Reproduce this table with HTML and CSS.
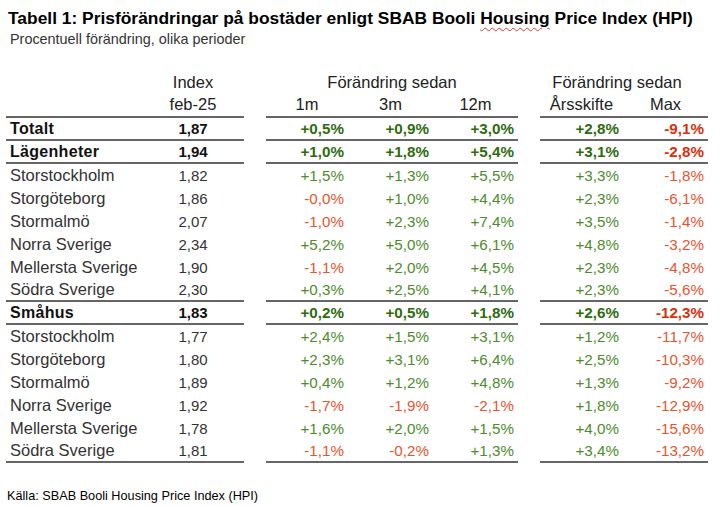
FILE: index.html
```html
<!DOCTYPE html>
<html lang="sv">
<head>
<meta charset="utf-8">
<title>Tabell 1</title>
<link rel="stylesheet" href="styles.css">
</head>
<body>
<div class="page">
  <h1 class="title">Tabell 1: Prisförändringar på bostäder enligt SBAB Booli <span class="spell">Housing</span> Price Index (HPI)</h1>
  <p class="sub">Procentuell förändring, olika perioder</p>
  <div class="tbl">
    <div class="row head1">
      <div class="c lab"></div><div class="c idx">Index</div><div class="sp"></div>
      <div class="c grp3">Förändring sedan</div><div class="sp"></div>
      <div class="c grp2">Förändring sedan</div>
    </div>
    <div class="row head2 line">
      <div class="c lab"></div><div class="c idx">feb-25</div><div class="sp"></div>
      <div class="c hc">1m</div><div class="c hc">3m</div><div class="c hc">12m</div><div class="sp"></div>
      <div class="c hc">Årsskifte</div><div class="c hc">Max</div>
    </div>

    <div class="row bold line">
      <div class="c lab">Totalt</div><div class="c idx">1,87</div><div class="sp"></div>
      <div class="c num pos">+0,5%</div><div class="c num pos">+0,9%</div><div class="c num pos">+3,0%</div><div class="sp"></div>
      <div class="c num pos">+2,8%</div><div class="c num neg">-9,1%</div>
    </div>
    <div class="row bold line">
      <div class="c lab">Lägenheter</div><div class="c idx">1,94</div><div class="sp"></div>
      <div class="c num pos">+1,0%</div><div class="c num pos">+1,8%</div><div class="c num pos">+5,4%</div><div class="sp"></div>
      <div class="c num pos">+3,1%</div><div class="c num neg">-2,8%</div>
    </div>
    <div class="row">
      <div class="c lab">Storstockholm</div><div class="c idx">1,82</div><div class="sp"></div>
      <div class="c num pos">+1,5%</div><div class="c num pos">+1,3%</div><div class="c num pos">+5,5%</div><div class="sp"></div>
      <div class="c num pos">+3,3%</div><div class="c num neg">-1,8%</div>
    </div>
    <div class="row">
      <div class="c lab">Storgöteborg</div><div class="c idx">1,86</div><div class="sp"></div>
      <div class="c num neg">-0,0%</div><div class="c num pos">+1,0%</div><div class="c num pos">+4,4%</div><div class="sp"></div>
      <div class="c num pos">+2,3%</div><div class="c num neg">-6,1%</div>
    </div>
    <div class="row">
      <div class="c lab">Stormalmö</div><div class="c idx">2,07</div><div class="sp"></div>
      <div class="c num neg">-1,0%</div><div class="c num pos">+2,3%</div><div class="c num pos">+7,4%</div><div class="sp"></div>
      <div class="c num pos">+3,5%</div><div class="c num neg">-1,4%</div>
    </div>
    <div class="row">
      <div class="c lab">Norra Sverige</div><div class="c idx">2,34</div><div class="sp"></div>
      <div class="c num pos">+5,2%</div><div class="c num pos">+5,0%</div><div class="c num pos">+6,1%</div><div class="sp"></div>
      <div class="c num pos">+4,8%</div><div class="c num neg">-3,2%</div>
    </div>
    <div class="row">
      <div class="c lab">Mellersta Sverige</div><div class="c idx">1,90</div><div class="sp"></div>
      <div class="c num neg">-1,1%</div><div class="c num pos">+2,0%</div><div class="c num pos">+4,5%</div><div class="sp"></div>
      <div class="c num pos">+2,3%</div><div class="c num neg">-4,8%</div>
    </div>
    <div class="row line">
      <div class="c lab">Södra Sverige</div><div class="c idx">2,30</div><div class="sp"></div>
      <div class="c num pos">+0,3%</div><div class="c num pos">+2,5%</div><div class="c num pos">+4,1%</div><div class="sp"></div>
      <div class="c num pos">+2,3%</div><div class="c num neg">-5,6%</div>
    </div>

    <div class="row bold line">
      <div class="c lab">Småhus</div><div class="c idx">1,83</div><div class="sp"></div>
      <div class="c num pos">+0,2%</div><div class="c num pos">+0,5%</div><div class="c num pos">+1,8%</div><div class="sp"></div>
      <div class="c num pos">+2,6%</div><div class="c num neg">-12,3%</div>
    </div>
    <div class="row">
      <div class="c lab">Storstockholm</div><div class="c idx">1,77</div><div class="sp"></div>
      <div class="c num pos">+2,4%</div><div class="c num pos">+1,5%</div><div class="c num pos">+3,1%</div><div class="sp"></div>
      <div class="c num pos">+1,2%</div><div class="c num neg">-11,7%</div>
    </div>
    <div class="row">
      <div class="c lab">Storgöteborg</div><div class="c idx">1,80</div><div class="sp"></div>
      <div class="c num pos">+2,3%</div><div class="c num pos">+3,1%</div><div class="c num pos">+6,4%</div><div class="sp"></div>
      <div class="c num pos">+2,5%</div><div class="c num neg">-10,3%</div>
    </div>
    <div class="row">
      <div class="c lab">Stormalmö</div><div class="c idx">1,89</div><div class="sp"></div>
      <div class="c num pos">+0,4%</div><div class="c num pos">+1,2%</div><div class="c num pos">+4,8%</div><div class="sp"></div>
      <div class="c num pos">+1,3%</div><div class="c num neg">-9,2%</div>
    </div>
    <div class="row">
      <div class="c lab">Norra Sverige</div><div class="c idx">1,92</div><div class="sp"></div>
      <div class="c num neg">-1,7%</div><div class="c num neg">-1,9%</div><div class="c num neg">-2,1%</div><div class="sp"></div>
      <div class="c num pos">+1,8%</div><div class="c num neg">-12,9%</div>
    </div>
    <div class="row">
      <div class="c lab">Mellersta Sverige</div><div class="c idx">1,78</div><div class="sp"></div>
      <div class="c num pos">+1,6%</div><div class="c num pos">+2,0%</div><div class="c num pos">+1,5%</div><div class="sp"></div>
      <div class="c num pos">+4,0%</div><div class="c num neg">-15,6%</div>
    </div>
    <div class="row line">
      <div class="c lab">Södra Sverige</div><div class="c idx">1,81</div><div class="sp"></div>
      <div class="c num neg">-1,1%</div><div class="c num neg">-0,2%</div><div class="c num pos">+1,3%</div><div class="sp"></div>
      <div class="c num pos">+3,4%</div><div class="c num neg">-13,2%</div>
    </div>
  </div>
  <p class="src">Källa: SBAB Booli Housing Price Index (HPI)</p>
</div>
</body>
</html>
```

FILE: styles.css
```css
* { box-sizing: border-box; }
html, body { margin: 0; padding: 0; background: #ffffff; }
body { width: 720px; height: 506px; overflow: hidden; }

.page {
  padding: 8px 0 0 0;
}

.title {
  margin: 0 0 0 8px;
  font-family: "Liberation Sans", Arial, sans-serif;
  font-weight: bold;
  font-size: 17.4px;
  line-height: 20px;
  color: #000;
  white-space: nowrap;
}
.spell {
  text-decoration: underline wavy #e03a3a;
  text-decoration-thickness: 1px;
  text-underline-offset: 3px;
}

.sub {
  margin: 3px 0 0 10px;
  font-family: "Liberation Sans", Arial, sans-serif;
  font-size: 14.4px;
  line-height: 16px;
  color: #333;
}

.tbl {
  margin: 24px 0 0 6px;
  width: 702px;
  font-family: "Liberation Sans", Arial, sans-serif;
  font-size: 16.5px;
  color: #333;
}

.row {
  display: grid;
  grid-template-columns: 136px 102px 22px 82px 85px 85px 22px 83px 85px;
  height: 23px;
  align-items: stretch;
}
.row .c {
  display: flex;
  align-items: center;
  white-space: nowrap;
}
.head1, .head2 { color: #222; }
.head1 { height: 22px; }
.head2 { height: 25px; }

.line .c { border-bottom: 2px solid #666; }

.lab { padding-left: 4px; }
.idx { justify-content: center; font-size: 15px; }
.head1 .idx, .head2 .idx { font-size: 16.5px; }
.num { justify-content: flex-end; padding-right: 4px; font-size: 15.2px; }
.hc { justify-content: center; }
.grp3 { grid-column: span 3; justify-content: center; }
.grp2 { grid-column: span 2; justify-content: center; padding-right: 14px; }

.bold { font-weight: bold; color: #111; }
.bold .lab { font-size: 16px; letter-spacing: 0.3px; }

.pos { color: #4d8b2c; }
.neg { color: #e8542d; }
.bold .pos { color: #2f6b10; }
.bold .neg { color: #d8300d; }

.src {
  margin: 25px 0 0 7px;
  font-family: "Liberation Sans", Arial, sans-serif;
  font-size: 12.7px;
  line-height: 16px;
  color: #000;
}
```
